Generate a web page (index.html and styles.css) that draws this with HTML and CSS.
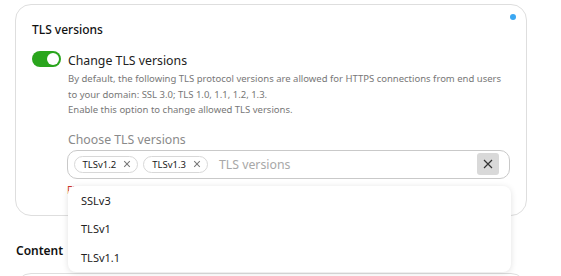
FILE: index.html
```html
<!DOCTYPE html>
<html>
<head>
<meta charset="utf-8">
<link rel="stylesheet" href="styles.css">
</head>
<body>
<div class="page">
  <section class="card">
    <span class="dot"></span>
    <h2 class="card-title">TLS versions</h2>
    <div class="option">
      <span class="toggle"><span class="knob"></span></span>
      <div class="option-body">
        <div class="option-label">Change TLS versions</div>
        <p class="option-desc">By default, the following TLS protocol versions are allowed for HTTPS connections from end users to your domain: SSL 3.0; TLS 1.0, 1.1, 1.2, 1.3.<br>Enable this option to change allowed TLS versions.</p>
        <div class="field">
          <div class="field-label">Choose TLS versions</div>
          <div class="select">
            <span class="chip">TLSv1.2<svg class="chip-x" viewBox="0 0 10 10"><path d="M1.5 1.5l7 7M8.5 1.5l-7 7"/></svg></span>
            <span class="chip">TLSv1.3<svg class="chip-x" viewBox="0 0 10 10"><path d="M1.5 1.5l7 7M8.5 1.5l-7 7"/></svg></span>
            <span class="placeholder">TLS versions</span>
            <span class="clear"><svg viewBox="0 0 10 10"><path d="M1 1l8 8M9 1l-8 8"/></svg></span>
          </div>
          <div class="error">Field is required</div>
          <ul class="menu">
            <li>SSLv3</li>
            <li>TLSv1</li>
            <li>TLSv1.1</li>
          </ul>
        </div>
      </div>
    </div>
  </section>
  <h3 class="section-title">Content</h3>
  <section class="card card-next"></section>
</div>
</body>
</html>
```
FILE: styles.css
```css
* { box-sizing: border-box; }
html, body { margin: 0; padding: 0; background: #fff; }
body {
  font-family: "Noto Sans", "Open Sans", sans-serif;
  color: #222;
  overflow: hidden;
  height: 276px;
}
.page {
  width: 512px;
  margin-left: 15px;
  padding-top: 4px;
}
.card {
  position: relative;
  border: 1px solid #dedede;
  border-radius: 16px;
  padding: 16px 16px 18px 16px;
  background: #fff;
}
.dot {
  position: absolute;
  top: 9px;
  right: 10px;
  width: 6px;
  height: 6px;
  border-radius: 50%;
  background: #3ba7f2;
}
.card-title {
  margin: 0;
  font-size: 12px;
  line-height: 18px;
  font-weight: 500;
  color: #111;
}
.option {
  display: flex;
  gap: 7px;
  margin-top: 12px;
}
.toggle {
  flex: none;
  width: 29px;
  height: 16px;
  border-radius: 8px;
  background: #2aa51d;
  position: relative;
}
.knob {
  position: absolute;
  right: 2px;
  top: 2px;
  width: 12px;
  height: 12px;
  border-radius: 50%;
  background: #fff;
}
.option-body { flex: 1; min-width: 0; }
.option-label {
  margin-top: 1px;
  font-size: 12.3px;
  line-height: 18px;
  color: #222;
}
.option-desc {
  margin: 1px 0 0 0;
  font-size: 9.5px;
  line-height: 15.5px;
  color: #777;
}
.field {
  position: relative;
  margin-top: 14px;
  margin-left: -1px;
}
.field-label {
  font-size: 12.3px;
  line-height: 16px;
  color: #8a8a8a;
  margin-left: 1px;
}
.select {
  margin-top: 2px;
  height: 29px;
  border: 1.5px solid #c9c9c9;
  border-radius: 10px;
  display: flex;
  align-items: center;
  padding: 0 10.5px 0 5.5px;
  gap: 5px;
}
.chip {
  display: inline-flex;
  align-items: center;
  gap: 7px;
  height: 17px;
  padding: 0 6px 0 8px;
  border: 1px solid #d8d8d8;
  border-radius: 9px;
  font-size: 9.5px;
  color: #1a1a1a;
}
.chip-x {
  width: 8px;
  height: 8px;
  stroke: #777;
  stroke-width: 1.3;
  fill: none;
}
.placeholder {
  margin-left: 6px;
  flex: 1;
  font-size: 12.3px;
  color: #a8a8a8;
}
.clear {
  width: 22px;
  height: 22px;
  border-radius: 3px;
  background: #d9d9d9;
  display: flex;
  align-items: center;
  justify-content: center;
}
.clear svg {
  width: 10px;
  height: 10px;
  stroke: #333;
  stroke-width: 1.2;
  fill: none;
}
.error {
  font-size: 10px;
  line-height: 14px;
  color: #d0352a;
  margin-top: 4px;
}
.menu {
  position: absolute;
  left: 1px;
  right: -1px;
  top: 54px;
  margin: 0;
  padding: 1px 0 0 0;
  list-style: none;
  background: #fff;
  border-radius: 8px;
  box-shadow: 0 1px 6px rgba(0,0,0,0.12);
  z-index: 2;
}
.menu li {
  height: 28.5px;
  line-height: 28.5px;
  padding-left: 13px;
  font-size: 11px;
  color: #222;
}
.section-title {
  margin: 26px 0 0 1px;
  font-size: 12px;
  line-height: 18px;
  font-weight: 600;
  color: #111;
}
.card-next {
  margin-top: 13px;
  height: 60px;
  padding: 0;
}
```
